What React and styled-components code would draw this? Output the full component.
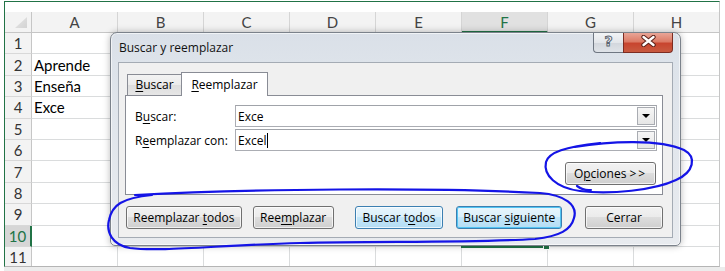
import React from 'react';
import styled, { createGlobalStyle } from 'styled-components';

const GlobalStyle = createGlobalStyle`
  html, body { margin: 0; padding: 0; background: #fff; }
  body { font-family: "Open Sans", "Noto Sans", sans-serif; }
`;

const Page = styled.div`
  position: relative;
  width: 725px;
  height: 271px;
  overflow: hidden;
  background: #fff;
  display: flex;
  flex-direction: column;
`;

const ExcelWindow = styled.div`
  flex: none;
  margin: 1px 0 0 4px;
  width: 716px;
  height: 266px;
  box-sizing: border-box;
  border-top: 1px solid #217346;
  border-left: 1px solid #217346;
  border-right: 1px solid #c6c6c6;
  border-bottom: 1px solid #b5b5b5;
  padding-top: 10px;
  overflow: hidden;
  background: #fff;
`;

const StatusStrip = styled.div`
  flex: 1;
  margin-left: 4px;
  background: #ececec;
`;

const Sheet = styled.div`
  display: grid;
  grid-template-columns: 27px repeat(8, 86px);
  grid-template-rows: 21px;
  grid-auto-rows: 21.4px;
  font-family: Lato, "Liberation Sans", sans-serif;
  font-size: 15px;
  color: #000;
`;

const Corner = styled.div`
  position: relative;
  box-sizing: border-box;
  background: #f3f3f3;
  border-right: 1px solid #c6c6c6;
  border-bottom: 1px solid #c6c6c6;
  &::after {
    content: '';
    position: absolute;
    right: 4px;
    bottom: 4px;
    width: 12px;
    height: 11px;
    background: linear-gradient(135deg, #e6e6e6, #d3d3d3);
    clip-path: polygon(100% 0, 100% 100%, 0 100%);
  }
`;

const ColHeader = styled.div`
  box-sizing: border-box;
  display: flex;
  align-items: center;
  justify-content: center;
  background: ${p => (p.$selected ? '#e1e1e1' : '#f3f3f3')};
  color: ${p => (p.$selected ? '#217346' : '#444')};
  border-right: 1px solid #d5d5d5;
  border-bottom: ${p => (p.$selected ? '2px solid #217346' : '1px solid #c6c6c6')};
`;

const RowHeader = styled.div`
  box-sizing: border-box;
  display: flex;
  align-items: center;
  justify-content: center;
  background: ${p => (p.$selected ? '#d6d6d6' : '#f3f3f3')};
  color: ${p => (p.$selected ? '#217346' : '#333')};
  border-right: ${p => (p.$selected ? '2px solid #217346' : '1px solid #c6c6c6')};
  border-bottom: 1px solid #d8d8d8;
`;

const Cell = styled.div`
  position: relative;
  box-sizing: border-box;
  display: flex;
  align-items: center;
  padding-left: 2px;
  white-space: nowrap;
  border-right: 1px solid #dadcdd;
  border-bottom: 1px solid #dadcdd;
  z-index: ${p => (p.$active ? 2 : 'auto')};
  outline: ${p => (p.$active ? '2px solid #217346' : 'none')};
  outline-offset: -1px;
`;

const FillHandle = styled.span`
  position: absolute;
  right: -3px;
  bottom: -4px;
  width: 5px;
  height: 5px;
  background: #217346;
  border: 1px solid #fff;
`;

const Dialog = styled.div`
  position: absolute;
  left: 110px;
  top: 32px;
  width: 571px;
  height: 214px;
  box-sizing: border-box;
  border: 1px solid #7b828b;
  border-radius: 7px 7px 5px 5px;
  padding: 0 7px 7px 7px;
  background: linear-gradient(180deg, #dae0e8 0px, #dde3ea 30px, #e8ebef 100%);
  box-shadow: 0 0 7px rgba(0, 0, 0, 0.28), inset 0 0 0 1px rgba(255, 255, 255, 0.6);
  display: flex;
  flex-direction: column;
  font-family: "Open Sans", "Noto Sans", sans-serif;
  font-size: 12px;
  color: #000;
  z-index: 5;
`;

const TitleBar = styled.div`
  height: 29px;
  flex: none;
  display: flex;
  justify-content: space-between;
  align-items: flex-start;
`;

const Title = styled.span`
  padding-left: 1px;
  line-height: 30px;
  font-size: 12px;
  color: #111;
`;

const Captions = styled.div`
  display: flex;
  height: 20px;
`;

const HelpBtn = styled.div`
  box-sizing: border-box;
  width: 30px;
  height: 20px;
  border: 1px solid #6f7782;
  border-top: none;
  border-right: none;
  border-radius: 0 0 0 4px;
  background: linear-gradient(180deg, #f2f4f6 0%, #e3e6ea 50%, #d2d6dc 51%, #dfe3e8 100%);
  display: flex;
  align-items: center;
  justify-content: center;
  font: bold 14px "DejaVu Sans", sans-serif;
  color: #f4f4f4;
  -webkit-text-stroke: 1px #5b6470;
  padding-bottom: 3px;
`;

const CloseBtn = styled.div`
  box-sizing: border-box;
  width: 50px;
  height: 20px;
  border: 1px solid #7c2c22;
  border-top: none;
  border-radius: 0 0 4px 0;
  background: linear-gradient(180deg, #e9a597 0%, #dc7b66 45%, #c8452f 55%, #c85a40 100%);
  display: flex;
  align-items: center;
  justify-content: center;
  padding-bottom: 3px;
`;

const Client = styled.div`
  box-sizing: border-box;
  height: 176px;
  flex: none;
  border: 1px solid #a4abb4;
  background: #f0f0f0;
  padding: 9px 9px 0 6px;
  display: flex;
  flex-direction: column;
`;

const TabStrip = styled.div`
  position: relative;
  z-index: 1;
  height: 24px;
  margin-bottom: -1px;
  padding-left: 2px;
  display: flex;
  align-items: flex-end;
`;

const Tab = styled.div`
  box-sizing: border-box;
  width: ${p => p.$w}px;
  height: ${p => (p.$active ? 24 : 21)}px;
  margin-bottom: ${p => (p.$active ? 0 : 1)}px;
  margin-left: ${p => (p.$active ? -1 : 0)}px;
  border: 1px solid #898c95;
  border-bottom: none;
  background: ${p => (p.$active ? '#fff' : 'linear-gradient(180deg, #f3f3f3 0%, #ebebeb 50%, #dedede 51%, #e6e6e6 100%)')};
  display: flex;
  align-items: center;
  justify-content: center;
  padding-bottom: 1px;
`;

const Pane = styled.div`
  box-sizing: border-box;
  height: 100px;
  flex: none;
  border: 1px solid #898c95;
  background: #fff;
  padding: 9px 6px 0 9px;
`;

const Fields = styled.div`
  display: grid;
  grid-template-columns: 100px 422px;
  row-gap: 2px;
  align-items: center;
`;

const Label = styled.span`
  white-space: nowrap;
`;

const Key = styled.span`
  text-decoration: underline;
  text-underline-offset: 2px;
`;

const Arrows = styled.span`
  letter-spacing: 2px;
  margin-left: 3px;
`;

const Combo = styled.div`
  box-sizing: border-box;
  height: 22px;
  border: 1px solid #abadb3;
  border-top-color: #a0a3a9;
  background: #fff;
  display: flex;
  align-items: center;
  padding-left: 2px;
`;

const ComboText = styled.span`
  display: flex;
  align-items: center;
`;

const Caret = styled.span`
  display: inline-block;
  width: 1px;
  height: 15px;
  background: #000;
  margin-left: 1px;
`;

const DropBtn = styled.span`
  position: relative;
  margin-left: auto;
  margin-right: 1px;
  box-sizing: border-box;
  width: 18px;
  height: 18px;
  border: 1px solid #a9acb2;
  background: linear-gradient(180deg, #f6f6f6, #e6e6e6);
  &::after {
    content: '';
    position: absolute;
    left: 4px;
    top: 6px;
    border-left: 4px solid transparent;
    border-right: 4px solid transparent;
    border-top: 4px solid #000;
  }
`;

const OptionsRow = styled.div`
  display: flex;
  justify-content: flex-end;
  margin-top: 11px;
`;

const ButtonRow = styled.div`
  display: flex;
  margin-top: 11px;
  padding-left: 1px;
`;

const Btn = styled.div`
  box-sizing: border-box;
  width: ${p => p.$w}px;
  height: 23px;
  margin-left: ${p => p.$ml || 0}px;
  display: flex;
  align-items: center;
  justify-content: center;
  padding-bottom: 1px;
  white-space: nowrap;
  border: 1px solid ${p => (p.$hot ? '#3c7fb1' : '#707070')};
  border-radius: 3px;
  background: ${p =>
    p.$hot
      ? 'linear-gradient(180deg, #e8f5fc 0%, #d9effb 49%, #c3e6f9 50%, #b4ddf4 100%)'
      : 'linear-gradient(180deg, #f2f2f2 0%, #ebebeb 49%, #dddddd 50%, #cfcfcf 100%)'};
  box-shadow: inset 0 0 0 1px ${p => (p.$focus ? '#52c4f2' : 'rgba(255,255,255,0.7)')};
`;

const BtnLabel = styled.span`
  white-space: pre;
`;

const Annotations = styled.svg`
  position: absolute;
  left: 0;
  top: 0;
  width: 725px;
  height: 271px;
  pointer-events: none;
  z-index: 10;
`;

const columns = ['A', 'B', 'C', 'D', 'E', 'F', 'G', 'H'];
const cellData = { 2: 'Aprende', 3: 'Enseña', 4: 'Exce' };
const rows = Array.from({ length: 11 }, (_, i) => i + 1);

function SheetGrid() {
  return (
    <Sheet>
      <Corner />
      {columns.map(c => (
        <ColHeader key={c} $selected={c === 'F'}>{c}</ColHeader>
      ))}
      {rows.map(r => (
        <React.Fragment key={r}>
          <RowHeader $selected={r === 10}>{r}</RowHeader>
          {columns.map(c => {
            const active = r === 10 && c === 'F';
            return (
              <Cell key={c} $active={active}>
                {c === 'A' ? cellData[r] : null}
                {active && <FillHandle />}
              </Cell>
            );
          })}
        </React.Fragment>
      ))}
    </Sheet>
  );
}

function FindReplaceDialog() {
  return (
    <Dialog>
      <TitleBar>
        <Title>Buscar y reemplazar</Title>
        <Captions>
          <HelpBtn>?</HelpBtn>
          <CloseBtn>
            <svg width="17" height="12" viewBox="0 0 17 12">
              <path d="M3.5 2 L13.5 10 M13.5 2 L3.5 10" stroke="#5a2119" strokeWidth="4.4" strokeLinecap="round" fill="none" />
              <path d="M3.5 2 L13.5 10 M13.5 2 L3.5 10" stroke="#ffffff" strokeWidth="2.4" strokeLinecap="round" fill="none" />
            </svg>
          </CloseBtn>
        </Captions>
      </TitleBar>
      <Client>
        <TabStrip>
          <Tab $w={55}><BtnLabel><Key>B</Key>uscar</BtnLabel></Tab>
          <Tab $w={87} $active><BtnLabel><Key>R</Key>eemplazar</BtnLabel></Tab>
        </TabStrip>
        <Pane>
          <Fields>
            <Label>B<Key>u</Key>scar:</Label>
            <Combo>
              <ComboText>Exce</ComboText>
              <DropBtn />
            </Combo>
            <Label>R<Key>e</Key>emplazar con:</Label>
            <Combo>
              <ComboText>Excel<Caret /></ComboText>
              <DropBtn />
            </Combo>
          </Fields>
          <OptionsRow>
            <Btn $w={91}><BtnLabel>O<Key>p</Key>ciones<Arrows>&gt;&gt;</Arrows></BtnLabel></Btn>
          </OptionsRow>
        </Pane>
        <ButtonRow>
          <Btn $w={116}><BtnLabel>Reemplazar <Key>t</Key>odos</BtnLabel></Btn>
          <Btn $w={81} $ml={11}><BtnLabel>Ree<Key>m</Key>plazar</BtnLabel></Btn>
          <Btn $w={89} $ml={21} $hot><BtnLabel>Buscar t<Key>o</Key>dos</BtnLabel></Btn>
          <Btn $w={106} $ml={13} $hot $focus><BtnLabel>Buscar <Key>s</Key>iguiente</BtnLabel></Btn>
          <Btn $w={78} $ml={23}><BtnLabel>Cerrar</BtnLabel></Btn>
        </ButtonRow>
      </Client>
    </Dialog>
  );
}

function Scribbles() {
  return (
    <Annotations viewBox="0 0 725 271">
      <g fill="none" stroke="#1414e6" strokeWidth="2.2" strokeLinecap="round" strokeLinejoin="round">
        <path d="M135 195 C250 189, 430 187, 540 193 C565 195, 578 205, 574 218 C571 230, 560 236, 535 239 C470 243, 380 241, 300 243 C220 245, 160 252, 130 248 C112 245, 106 232, 109 220 C112 205, 122 198, 152 195" />
        <path d="M575 147 C610 141, 660 139, 684 150 C697 157, 694 172, 676 180 C655 190, 610 195, 580 191 C556 188, 543 175, 546 162 C549 152, 565 147, 600 143" />
        <path d="M577 186 Q584 191 591 190" />
      </g>
    </Annotations>
  );
}

export default function App() {
  return (
    <>
      <GlobalStyle />
      <Page>
        <ExcelWindow>
          <SheetGrid />
        </ExcelWindow>
        <StatusStrip />
        <FindReplaceDialog />
        <Scribbles />
      </Page>
    </>
  );
}
